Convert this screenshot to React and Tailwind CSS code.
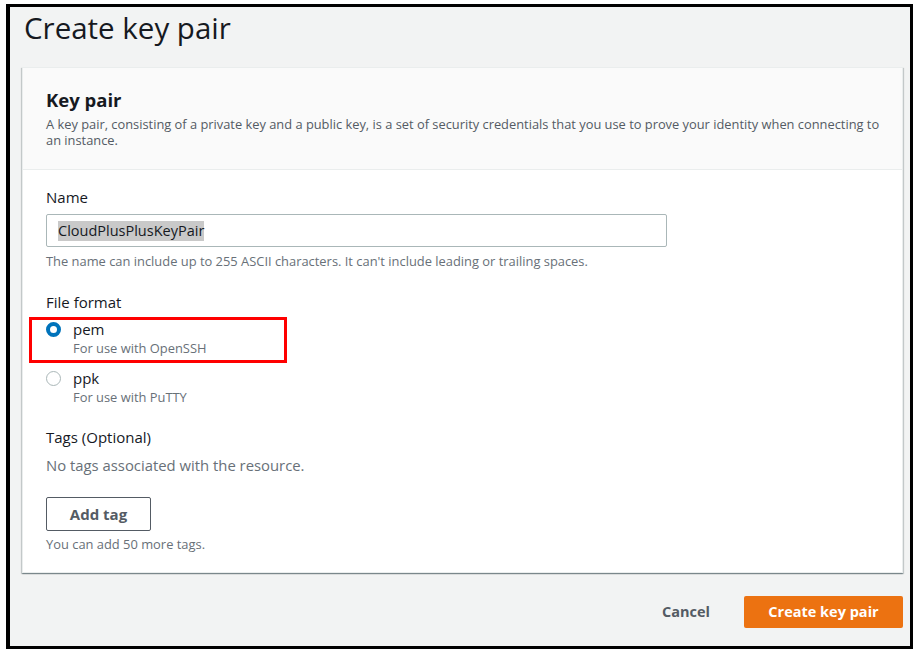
import React from 'react';

const font = { fontFamily: '"Open Sans", "Noto Sans", sans-serif' };

const Radio = ({ checked }) => (
  <span
    className={
      checked
        ? 'mt-[3px] block h-[15px] w-[15px] shrink-0 rounded-full border-[4px] border-[#0073bb] bg-white'
        : 'mt-[3px] block h-[15px] w-[15px] shrink-0 rounded-full border-[1.5px] border-[#aab7b8] bg-white'
    }
  />
);

const App = () => {
  return (
    <div className="min-h-screen bg-white pl-[6px] pt-[4px]" style={font}>
      <div className="flex h-[645px] w-[907px] flex-col border-[3px] border-l-[4px] border-black bg-[#f2f3f3]">
        <h1 className="ml-[14px] mt-[3px] text-[29.5px] leading-[36px] text-[#16191f]">Create key pair</h1>

        <div className="ml-[12px] mr-[7px] mt-[21px] border border-[#eaeded] bg-white shadow-[0_1px_1px_0_rgba(0,28,36,0.3),1px_1px_1px_0_rgba(0,28,36,0.15),-1px_1px_1px_0_rgba(0,28,36,0.15)]">
          <div className="border-b border-[#eaeded] bg-[#fafafa] pb-[21px] pl-[23px] pr-[16px] pt-[20px]">
            <h2 className="text-[18.5px] font-bold leading-[24px] text-[#16191f]">Key pair</h2>
            <p className="mt-[4px] text-[12.85px] leading-[16px] text-[#545b64]">
              A key pair, consisting of a private key and a public key, is a set of security credentials that you use to prove your identity when connecting to an instance.
            </p>
          </div>

          <div className="px-[23px] pb-[20px] pt-[16px]">
            <div className="text-[15px] leading-[22px] text-[#16191f]">Name</div>
            <div className="mt-[6px] flex h-[33px] w-[621px] items-center rounded-[2px] border border-[#aab7b8] px-[11px]">
              <span className="bg-[#c9c9c9] text-[14.5px] leading-[20px] text-[#16191f]">CloudPlusPlusKeyPair</span>
            </div>
            <p className="mt-[6px] text-[12.9px] leading-[16px] text-[#687078]">
              The name can include up to 255 ASCII characters. It can't include leading or trailing spaces.
            </p>

            <div className="mt-[22px] text-[15px] leading-[22px] text-[#16191f]">File format</div>
            <div className="relative mt-[6px]">
              <div className="absolute left-[-17px] top-[-2px] h-[46px] w-[258px] border-[3px] border-[#ff0000]" />
              <label className="flex gap-[12px]">
                <Radio checked />
                <span className="flex flex-col">
                  <span className="text-[15px] leading-[20px] text-[#16191f]">pem</span>
                  <span className="text-[12.9px] leading-[18px] text-[#687078]">For use with OpenSSH</span>
                </span>
              </label>
              <label className="mt-[11px] flex gap-[12px]">
                <Radio />
                <span className="flex flex-col">
                  <span className="text-[15px] leading-[20px] text-[#16191f]">ppk</span>
                  <span className="text-[12.9px] leading-[18px] text-[#687078]">For use with PuTTY</span>
                </span>
              </label>
            </div>

            <div className="mt-[20px] text-[15px] leading-[22px] text-[#16191f]">Tags (Optional)</div>
            <p className="mt-[6px] text-[14.85px] leading-[22px] text-[#687078]">No tags associated with the resource.</p>
            <button
              type="button"
              className="mt-[21px] h-[34px] w-[105px] rounded-[2px] border border-[#545b64] bg-white text-[15px] font-bold text-[#545b64]"
            >
              Add tag
            </button>
            <p className="mt-[5px] text-[12.9px] leading-[16px] text-[#687078]">You can add 50 more tags.</p>
          </div>
        </div>

        <div className="mr-[7px] mt-[23px] flex items-center justify-end gap-[34px]">
          <button type="button" className="text-[14.5px] font-bold text-[#545b64]">Cancel</button>
          <button
            type="button"
            className="h-[32px] w-[159px] rounded-[2px] bg-[#ec7211] text-[14.5px] font-bold text-white"
          >
            Create key pair
          </button>
        </div>
      </div>
    </div>
  );
};

export default App;
